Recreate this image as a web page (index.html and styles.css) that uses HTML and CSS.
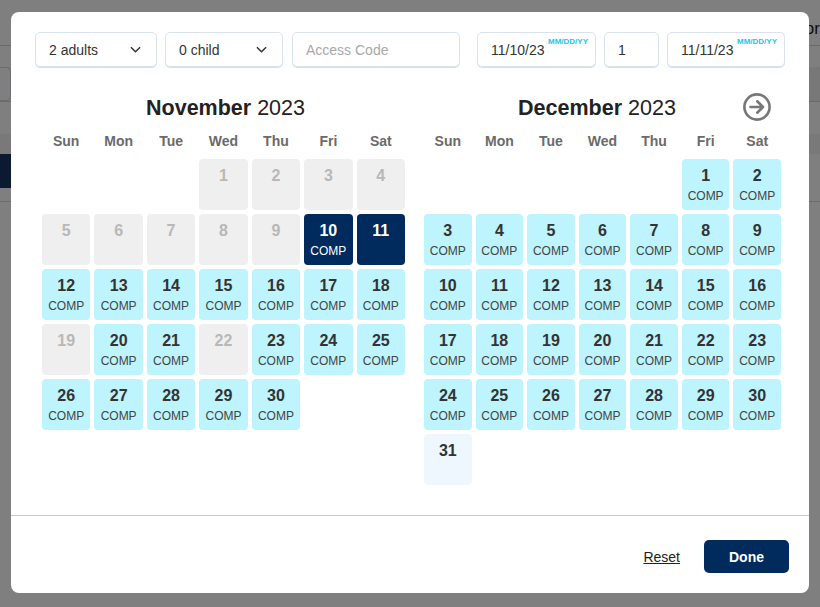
FILE: index.html
```html
<!DOCTYPE html>
<html lang="en">
<head>
    <meta charset="UTF-8">
    <meta name="viewport" content="width=device-width, initial-scale=1.0">
    <title>Select Dates</title>
    <link rel="stylesheet" href="styles.css">
</head>
<body>
    <div class="page">
        <header class="site-header">
            <span class="site-link">Vendor</span>
        </header>
        <div class="search-row">
            <div class="search-box"></div>
        </div>
        <div class="strip"></div>
        <div class="nav-bar"></div>
        <div class="rule"></div>
    </div>

    <div class="overlay">
        <div class="modal">
            <div class="modal-body">
                <div class="filters">
                    <div class="field field-adults">
                        <span>2 adults</span>
                        <svg class="chevron" viewBox="0 0 12 7" width="12" height="7"><path d="M1 1l5 5 5-5" fill="none" stroke="#333" stroke-width="1.6"/></svg>
                    </div>
                    <div class="field field-child">
                        <span>0 child</span>
                        <svg class="chevron" viewBox="0 0 12 7" width="12" height="7"><path d="M1 1l5 5 5-5" fill="none" stroke="#333" stroke-width="1.6"/></svg>
                    </div>
                    <div class="field field-code">
                        <span class="placeholder">Access Code</span>
                    </div>
                    <div class="field field-date field-from">
                        <span>11/10/23</span>
                        <span class="date-hint">MM/DD/YY</span>
                    </div>
                    <div class="field field-nights">
                        <span>1</span>
                    </div>
                    <div class="field field-date field-to">
                        <span>11/11/23</span>
                        <span class="date-hint">MM/DD/YY</span>
                    </div>
                </div>

                <div class="months">
                    <div class="month month-nov">
                        <div class="month-title"><b>November</b> 2023</div>
                        <div class="weekdays">
                            <span>Sun</span><span>Mon</span><span>Tue</span><span>Wed</span><span>Thu</span><span>Fri</span><span>Sat</span>
                        </div>
                        <div class="days" id="novDays"></div>
                    </div>
                    <div class="month month-dec">
                        <div class="month-title month-title-next"><b>December</b> 2023
                            <button class="next-btn" aria-label="Next month">
                                <svg viewBox="0 0 28 28" width="28" height="28">
                                    <circle cx="14" cy="14" r="12.6" fill="none" stroke="#777" stroke-width="2.6"/>
                                    <path d="M7.5 14h12M14.2 8.3l5.8 5.7-5.8 5.7" fill="none" stroke="#777" stroke-width="2.6" stroke-linecap="round" stroke-linejoin="round"/>
                                </svg>
                            </button>
                        </div>
                        <div class="weekdays">
                            <span>Sun</span><span>Mon</span><span>Tue</span><span>Wed</span><span>Thu</span><span>Fri</span><span>Sat</span>
                        </div>
                        <div class="days" id="decDays"></div>
                    </div>
                </div>
            </div>

            <div class="modal-footer">
                <a class="reset-link" href="#">Reset</a>
                <button class="done-btn">Done</button>
            </div>
        </div>
    </div>

    <script>
        function buildMonth(id, firstDay, days, stateOf) {
            const grid = document.getElementById(id);
            for (let i = 0; i < firstDay; i++) {
                grid.appendChild(document.createElement('div'));
            }
            for (let d = 1; d <= days; d++) {
                const state = stateOf(d);
                const cell = document.createElement('div');
                cell.className = 'day day-' + state.type;
                const num = document.createElement('span');
                num.className = 'day-num';
                num.textContent = d;
                cell.appendChild(num);
                if (state.comp) {
                    const tag = document.createElement('span');
                    tag.className = 'day-tag';
                    tag.textContent = 'COMP';
                    cell.appendChild(tag);
                }
                grid.appendChild(cell);
            }
        }

        // November: past / unavailable days are greyed out
        const novOff = [1, 2, 3, 4, 5, 6, 7, 8, 9, 19, 22];
        buildMonth('novDays', 3, 30, function(d) {
            if (novOff.includes(d)) return { type: 'off', comp: false };
            if (d === 10) return { type: 'selected', comp: true };
            if (d === 11) return { type: 'selected', comp: false };
            return { type: 'comp', comp: true };
        });

        buildMonth('decDays', 5, 31, function(d) {
            if (d === 31) return { type: 'open', comp: false };
            return { type: 'comp', comp: true };
        });
    </script>
</body>
</html>
```

FILE: styles.css
```css
* {
    box-sizing: border-box;
}
body {
    margin: 0;
    font-family: "Liberation Sans", Arial, sans-serif;
    color: #333;
    background-color: white;
    overflow: hidden;
}

/* page behind the dialog */
.page {
    width: 820px;
    height: 607px;
}
.site-header {
    height: 46px;
    padding-top: 12px;
    border-bottom: 1px solid #c7d7e8;
    display: flex;
    justify-content: flex-end;
    align-items: center;
}
.site-link {
    font-size: 17px;
    color: #222;
}
.search-row {
    margin-top: 21px;
    height: 35px;
    background-color: #f0f0f0;
    border-bottom: 1px solid #c7d7e8;
}
.search-box {
    width: 11px;
    height: 34px;
    background-color: white;
    border: 1px solid #d3dbe4;
    border-left: none;
    border-radius: 0 5px 5px 0;
}
.strip {
    margin-top: 32px;
    height: 20px;
    background-color: #f2f2f2;
}
.nav-bar {
    width: 200px;
    height: 34px;
    background-color: #163561;
}
.rule {
    margin-top: 13px;
    border-bottom: 1px solid #d9d9d9;
}

/* dialog */
.overlay {
    position: fixed;
    inset: 0;
    background-color: rgba(0, 0, 0, 0.5);
    padding: 12px 11px;
}
.modal {
    width: 798px;
    height: 581px;
    background-color: white;
    border-radius: 8px;
    display: flex;
    flex-direction: column;
}
.modal-body {
    flex: 1;
    padding: 20px 24px 0;
}

.filters {
    display: flex;
    gap: 8px;
    height: 35px;
}
.field {
    position: relative;
    display: flex;
    align-items: center;
    justify-content: space-between;
    padding: 0 15px 0 13px;
    border: 1px solid #d9e3ee;
    border-radius: 5px;
    box-shadow: 0 1px 0 #cfe0f3;
    font-size: 14px;
    color: #333;
}
.field-adults { width: 122px; }
.field-child { width: 118px; }
.field-code { width: 168px; margin-left: 1px; }
.field-from { width: 119px; margin-left: 9px; }
.field-nights { width: 55px; }
.field-to { width: 118px; }
.field-date,
.field-nights {
    padding-left: 13px;
}
.placeholder {
    color: #a8a8a8;
}
.chevron {
    width: 11px;
    height: 7px;
}
.date-hint {
    position: absolute;
    top: 4px;
    right: 7px;
    font-size: 8px;
    font-weight: bold;
    color: #25c4ec;
}

.months {
    display: flex;
    gap: 19px;
    margin-top: 27px;
    padding-left: 7px;
}
.month-nov { width: 363px; }
.month-dec { width: 357px; }
.month-title {
    position: relative;
    height: 28px;
    line-height: 28px;
    font-size: 21.5px;
    text-align: center;
    color: #222;
}
.month-nov .month-title {
    padding-left: 4px;
}
.month-title-next {
    padding-right: 11px;
}
.next-btn {
    position: absolute;
    right: 10px;
    top: -1px;
    width: 28px;
    height: 28px;
    padding: 0;
    border: none;
    background: none;
    cursor: pointer;
}
.next-btn svg {
    display: block;
}
.weekdays {
    display: grid;
    grid-template-columns: repeat(7, 1fr);
    gap: 4px;
    margin-top: 10px;
    line-height: 18px;
    font-size: 14px;
    font-weight: bold;
    color: #6a6a6a;
    text-align: center;
}
.days {
    display: grid;
    grid-template-columns: repeat(7, 1fr);
    grid-auto-rows: 51px;
    gap: 4px;
    margin-top: 9px;
}
.day {
    display: flex;
    flex-direction: column;
    align-items: center;
    padding-top: 7px;
    border-radius: 4px;
}
.day-num {
    font-size: 16px;
    line-height: 20px;
    font-weight: bold;
    color: #333;
}
.day-tag {
    margin-top: 3px;
    font-size: 12px;
    line-height: 14px;
    color: #444;
}
.day-comp { background-color: #bdf4fd; }
.day-off { background-color: #efefef; }
.day-off .day-num { color: #b8b8b8; }
.day-open { background-color: #eef6fe; }
.day-selected { background-color: #002b5c; }
.day-selected .day-num,
.day-selected .day-tag { color: white; }

.modal-footer {
    display: flex;
    justify-content: flex-end;
    align-items: center;
    gap: 24px;
    padding: 24px 20px 20px;
    border-top: 1px solid #c9c9c9;
}
.reset-link {
    font-size: 14px;
    color: #222;
    text-decoration: underline;
}
.done-btn {
    width: 85px;
    height: 33px;
    border: none;
    border-radius: 5px;
    background-color: #002b5c;
    color: white;
    font-family: inherit;
    font-size: 14px;
    font-weight: bold;
    cursor: pointer;
}
```
